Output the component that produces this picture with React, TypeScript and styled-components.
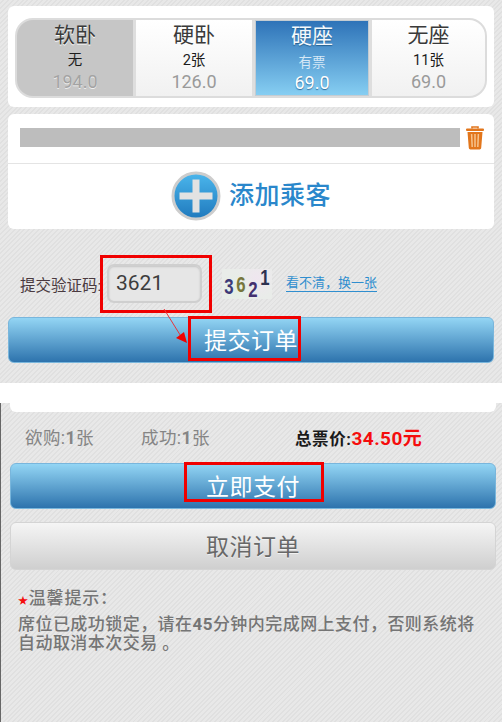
import styled, { createGlobalStyle } from "styled-components";

const GlobalStyle = createGlobalStyle`
  html, body {
    margin: 0;
    padding: 0;
    background: #fff;
  }
  body {
    font-family: Roboto, "Noto Sans CJK SC", sans-serif;
  }
`;

const seats = [
  { name: "软卧", count: "无", price: "194.0", state: "off", width: 116 },
  { name: "硬卧", count: "2张", price: "126.0", state: "normal", width: 116 },
  { name: "硬座", count: "有票", price: "69.0", state: "active", width: 114 },
  { name: "无座", count: "11张", price: "69.0", state: "normal", width: 113 },
] as const;

type SeatState = "off" | "normal" | "active";

const App = () => {
  return (
    <Page>
      <GlobalStyle />
      <TopScreen>
        <Card>
          <SeatTabs>
            {seats.map((seat) => (
              <SeatTab key={seat.name} $state={seat.state} $width={seat.width}>
                <SeatName $state={seat.state}>{seat.name}</SeatName>
                <SeatCount $state={seat.state}>{seat.count}</SeatCount>
                <SeatPrice $state={seat.state}>{seat.price}</SeatPrice>
              </SeatTab>
            ))}
          </SeatTabs>
        </Card>

        <PassengerCard>
          <PassengerRow>
            <HiddenName />
            <svg width="20" height="24" viewBox="0 0 20 24">
              <path d="M7 2.5 V1 H13 V2.5" fill="none" stroke="#e2761c" strokeWidth="1.6" />
              <rect x="1" y="2.5" width="18" height="2.4" rx="1" fill="#e2761c" />
              <path
                d="M2.5 6 H17.5 L16.2 22 Q16.1 23.4 14.6 23.4 H5.4 Q3.9 23.4 3.8 22 Z"
                fill="#e2761c"
              />
              <path
                d="M6.6 8 L7.2 21 M10 8 V21 M13.4 8 L12.8 21"
                stroke="#f6c48e"
                strokeWidth="1.5"
              />
            </svg>
          </PassengerRow>
          <AddPassenger>
            <svg width="50" height="50" viewBox="0 0 50 50">
              <defs>
                <linearGradient id="plusFill" x1="0" y1="0" x2="0" y2="1">
                  <stop offset="0" stopColor="#4bb6ec" />
                  <stop offset="1" stopColor="#1f79bd" />
                </linearGradient>
              </defs>
              <circle cx="25" cy="25" r="23" fill="url(#plusFill)" stroke="#cdcdcd" strokeWidth="3" />
              <rect x="8.5" y="21.5" width="33" height="7" fill="#e2e2e2" />
              <rect x="21.5" y="8.5" width="7" height="33" fill="#e2e2e2" />
            </svg>
            <AddLabel>添加乘客</AddLabel>
          </AddPassenger>
        </PassengerCard>

        <CaptchaRow>
          <CaptchaLabel>提交验证码:</CaptchaLabel>
          <CodeInput>3621</CodeInput>
          <CaptchaImage>
            <CaptchaDigit $color="#3c3a78" $drop={3}>3</CaptchaDigit>
            <CaptchaDigit $color="#77763c" $drop={1}>6</CaptchaDigit>
            <CaptchaDigit $color="#43306f" $drop={6}>2</CaptchaDigit>
            <CaptchaDigit $color="#2c3150" $drop={-6}>1</CaptchaDigit>
          </CaptchaImage>
          <RefreshLink>看不清，换一张</RefreshLink>
          <RedBox $left={92} $top={-9} $width={112} $height={58} />
        </CaptchaRow>

        <ButtonSlot>
          <BlueButton>提交订单</BlueButton>
          <RedBox $left={180} $top={-1} $width={113} $height={45} />
          <ArrowMark width="30" height="40" viewBox="0 0 30 40">
            <path d="M2 1 L20 30" stroke="#e8343a" strokeWidth="1" />
            <path d="M25 35 L14 30 L22 24 Z" fill="#f00000" />
          </ArrowMark>
        </ButtonSlot>
      </TopScreen>

      <BottomScreen>
        <CardTail />
        <Summary>
          <Counts>欲购:<b>1</b>张</Counts>
          <Counts>成功:<b>1</b>张</Counts>
          <Total>
            总票价:<Money>34.50元</Money>
          </Total>
        </Summary>
        <PaySlot>
          <BlueButton>立即支付</BlueButton>
          <RedBox $left={174} $top={-1} $width={140} $height={40} />
        </PaySlot>
        <CancelButton>取消订单</CancelButton>
        <Notice>
          <NoticeTitle>
            <Star>★</Star>温馨提示：
          </NoticeTitle>
          <NoticeLine>
            席位已成功锁定，请在<b>45</b>分钟内完成网上支付，否则系统将
          </NoticeLine>
          <NoticeLine>自动取消本次交易 。</NoticeLine>
        </Notice>
      </BottomScreen>
    </Page>
  );
};

export default App;

const stripes = `repeating-linear-gradient(
  135deg,
  #e8e8e8 0,
  #e8e8e8 2px,
  #e0e0e0 2px,
  #e0e0e0 3.4px
)`;

const Page = styled.div`
  width: 502px;
  height: 722px;
  display: flex;
  flex-direction: column;
  gap: 20px;
  overflow: hidden;
`;

const TopScreen = styled.section`
  height: 383px;
  padding: 6px 8px 0;
  box-sizing: border-box;
  background: ${stripes};
`;

const Card = styled.div`
  height: 101px;
  padding: 12px 7px 0;
  box-sizing: border-box;
  background: #fff;
  border-radius: 6px;
`;

const SeatTabs = styled.div`
  display: flex;
  height: 80px;
  box-sizing: border-box;
  border: 2px solid #dcdcdc;
  border-radius: 18px;
  overflow: hidden;
  background: #dedede;
  gap: 3px;
`;

const SeatTab = styled.div<{ $state: SeatState; $width: number }>`
  width: ${(p) => p.$width}px;
  flex: none;
  display: flex;
  flex-direction: column;
  align-items: center;
  box-sizing: border-box;
  background: ${(p) =>
    p.$state === "off"
      ? "#c6c6c6"
      : p.$state === "active"
        ? "linear-gradient(#2e73b8, #86cef2)"
        : "linear-gradient(#ffffff, #f1f1f1)"};
  border: ${(p) => (p.$state === "active" ? "1px solid #c4ccd2" : "none")};
`;

const SeatName = styled.div<{ $state: SeatState }>`
  font-size: 21px;
  line-height: 30px;
  color: ${(p) => (p.$state === "active" ? "#f4f9fd" : "#3a3a3a")};
  text-shadow: ${(p) =>
    p.$state === "active" ? "0 1px 1px #25608f" : "0 1px 0 #ffffff"};
`;

const SeatCount = styled.div<{ $state: SeatState }>`
  font-size: ${(p) => (p.$state === "active" ? 13.5 : 14.5)}px;
  line-height: 20px;
  margin-top: 1px;
  color: ${(p) => (p.$state === "active" ? "#d5e8f6" : "#1c1c1c")};
`;

const SeatPrice = styled.div<{ $state: SeatState }>`
  font-size: 18px;
  line-height: 22px;
  color: ${(p) =>
    p.$state === "active" ? "#ffffff" : p.$state === "off" ? "#a3a3a3" : "#9a9a9a"};
  text-shadow: ${(p) =>
    p.$state === "active"
      ? "0 1px 1px #2e6d9f"
      : p.$state === "off"
        ? "0 1px 0 #eeeeee"
        : "none"};
`;

const PassengerCard = styled.div`
  height: 115px;
  margin-top: 7px;
  display: flex;
  flex-direction: column;
  background: #fff;
  border-radius: 6px;
`;

const PassengerRow = styled.div`
  height: 50px;
  flex: none;
  display: flex;
  align-items: flex-start;
  gap: 5px;
  padding: 12px 0 0 12px;
  box-sizing: border-box;
  border-bottom: 1px solid #e4e4e4;
`;

const HiddenName = styled.div`
  width: 440px;
  height: 19px;
  margin-top: 2px;
  background: #bdbdbd;
`;

const AddPassenger = styled.div`
  flex: 1;
  display: flex;
  align-items: center;
  justify-content: center;
  gap: 8px;
  padding-bottom: 1px;
`;

const AddLabel = styled.span`
  font-size: 25px;
  line-height: 32px;
  letter-spacing: 0.5px;
  font-weight: 500;
  color: #2a87cb;
`;

const CaptchaRow = styled.div`
  position: relative;
  height: 39px;
  margin-top: 35px;
  padding-left: 12px;
  display: flex;
  align-items: center;
`;

const CaptchaLabel = styled.span`
  width: 87px;
  flex: none;
  font-size: 15.5px;
  color: #4a3a40;
`;

const CodeInput = styled.div`
  width: 95px;
  height: 39px;
  flex: none;
  box-sizing: border-box;
  padding-left: 7px;
  font-size: 21px;
  line-height: 35px;
  color: #3d3d3d;
  background: #e6e6e6;
  border: 2px solid #cfcfcf;
  border-radius: 7px;
  box-shadow: inset 0 1px 2px #c4c4c4;
`;

const CaptchaImage = styled.div`
  width: 50px;
  height: 30px;
  margin-left: 20px;
  padding-left: 1px;
  flex: none;
  box-sizing: border-box;
  display: flex;
  align-items: center;
  background:
    radial-gradient(circle at 30% 70%, #e4efe4 0, transparent 45%),
    radial-gradient(circle at 70% 30%, #efe6ef 0, transparent 50%),
    #e9ece9;
  font-family: "Liberation Sans", sans-serif;
`;

const CaptchaDigit = styled.span<{ $color: string; $drop: number }>`
  width: 12px;
  font-size: 21px;
  font-weight: 700;
  color: ${(p) => p.$color};
  transform: translateY(${(p) => p.$drop}px) scale(0.8, 1.05);
`;

const RefreshLink = styled.span`
  margin-left: 14px;
  font-size: 13px;
  line-height: 16px;
  color: #2f8ecf;
  border-bottom: 1px solid #2f8ecf;
`;

const RedBox = styled.div<{ $left: number; $top: number; $width: number; $height: number }>`
  position: absolute;
  left: ${(p) => p.$left}px;
  top: ${(p) => p.$top}px;
  width: ${(p) => p.$width}px;
  height: ${(p) => p.$height}px;
  box-sizing: border-box;
  border: 3px solid #f00000;
  pointer-events: none;
`;

const ButtonSlot = styled.div`
  position: relative;
  margin-top: 14px;
`;

const BlueButton = styled.div`
  height: 46px;
  display: flex;
  align-items: center;
  justify-content: center;
  box-sizing: border-box;
  padding-bottom: 3px;
  font-size: 23px;
  letter-spacing: 0.5px;
  color: #fff;
  background: linear-gradient(#93d5f4, #2d73ad);
  border: 1px solid #79b6dc;
  border-radius: 6px;
`;

const ArrowMark = styled.svg`
  position: absolute;
  left: 154px;
  top: -9px;
`;

const BottomScreen = styled.section`
  flex: 1;
  padding: 0 6px 0 10px;
  box-sizing: border-box;
  background: ${stripes};
  border-left: 1px solid #666;
`;

const CardTail = styled.div`
  height: 9px;
  margin-left: -1px;
  background: #fff;
  border-radius: 0 0 6px 6px;
`;

const Summary = styled.div`
  height: 51px;
  display: flex;
  align-items: center;
  padding: 0 0 3px 14px;
  box-sizing: border-box;
  font-size: 17.5px;
`;

const Counts = styled.span`
  width: 116px;
  flex: none;
  letter-spacing: 0.4px;
  color: #858585;
  b {
    font-weight: 700;
  }
`;

const Total = styled.span`
  margin-left: 38px;
  font-size: 16.5px;
  letter-spacing: 0.6px;
  font-weight: 700;
  color: #1a1a1a;
`;

const Money = styled.span`
  font-size: 19px;
  letter-spacing: 0.4px;
  color: #f50d0d;
`;

const PaySlot = styled.div`
  position: relative;
  margin-left: -1px;
`;

const CancelButton = styled.div`
  height: 48px;
  margin: 13px 0 0 -1px;
  display: flex;
  align-items: center;
  justify-content: center;
  box-sizing: border-box;
  padding-bottom: 3px;
  font-size: 23px;
  letter-spacing: 0.5px;
  color: #686868;
  text-shadow: 0 1px 0 #f2f2f2;
  background: linear-gradient(#f5f5f5, #cfcfcf);
  border: 1px solid #d4d4d4;
  border-radius: 6px;
`;

const Notice = styled.div`
  margin-top: 16px;
  padding-left: 7px;
  color: #757575;
`;

const NoticeTitle = styled.div`
  font-size: 17px;
  line-height: 24px;
  font-weight: 500;
  letter-spacing: 0.8px;
  margin-bottom: 2px;
`;

const Star = styled.span`
  font-size: 10px;
  color: #f50d0d;
`;

const NoticeLine = styled.div`
  font-size: 17px;
  line-height: 19px;
  letter-spacing: 0.45px;
  font-weight: 500;
  white-space: nowrap;
  b {
    font-weight: 700;
  }
`;
